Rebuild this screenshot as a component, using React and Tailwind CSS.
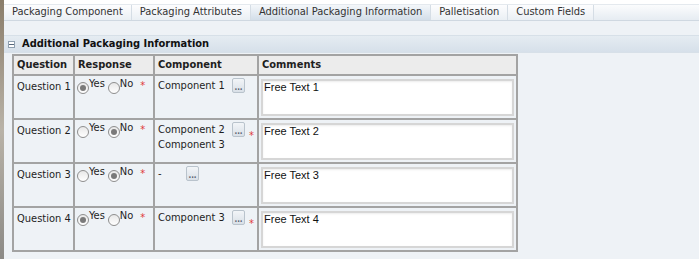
import { useState } from 'react';

const tabs = ['Packaging Component', 'Packaging Attributes', 'Additional Packaging Information', 'Palletisation', 'Custom Fields'];

const rows = [
  { q: 'Question 1', answer: 'yes', components: ['Component 1'], compStar: false, text: 'Free Text 1' },
  { q: 'Question 2', answer: 'no', components: ['Component 2', 'Component 3'], compStar: true, text: 'Free Text 2' },
  { q: 'Question 3', answer: 'no', components: ['-'], compStar: false, text: 'Free Text 3' },
  { q: 'Question 4', answer: 'yes', components: ['Component 3'], compStar: true, text: 'Free Text 4' },
];

function Radio({ checked, label }) {
  return (
    <span className="inline-flex items-start">
      <span className="mt-[4px] grid h-[12px] w-[12px] place-items-center rounded-full border border-[#8e8e8e] bg-gradient-to-b from-[#e8e8e8] to-white">
        {checked && <span className="h-[6px] w-[6px] rounded-full bg-[#7a7a7a]" />}
      </span>
      <span className="leading-[12px]">{label}</span>
    </span>
  );
}

function Star() {
  return <span className="text-[11px] leading-none text-[#e03a3a]">*</span>;
}

function PickButton() {
  return (
    <span className="flex h-[15px] w-[13px] items-end justify-center rounded-[2px] border border-[#b9c3cc] bg-gradient-to-b from-[#f2f5f8] to-[#d9e0e7] pb-[1px] text-[8px] font-bold leading-[6px] text-[#5a6470]">
      ...
    </span>
  );
}

export default function App() {
  const [active] = useState(2);
  return (
    <div className="h-[259px] w-[699px] overflow-hidden bg-[#eef2f6] font-['DejaVu_Sans_Condensed','DejaVu_Sans',sans-serif] text-[11px] text-[#1e1e1e]">
      <div className="flex h-full">
        <div className="w-[4px] bg-gradient-to-b from-[#8a7d6a] via-[#b9b3a8] to-[#8c8a86]" />
        <div className="flex-1">
          <div className="h-[5px] border-b border-[#e4e9ee] bg-white" />
          <div className="flex h-[16px] border-b border-[#cfd8e1] bg-gradient-to-b from-[#fbfcfd] to-[#e6ecf2]">
            {tabs.map((t, i) => (
              <div
                key={t}
                className={`flex items-center whitespace-nowrap border-r border-[#d5dde5] px-[8px] text-[#333] ${
                  i === active ? 'bg-gradient-to-b from-[#f4f7fa] to-[#d3dee9]' : 'bg-gradient-to-b from-[#fdfdfe] to-[#eaeff4]'
                }`}
              >
                {t}
              </div>
            ))}
          </div>
          <div className="h-[14px] bg-[#eef2f6]" />
          <div className="flex h-[18px] items-center border-y border-[#d7e0e8] bg-gradient-to-b from-[#e5ecf2] to-[#d6e0ea] pl-[4px]">
            <span className="mr-[7px] grid h-[7px] w-[7px] place-items-center border border-[#8fa0b0] bg-white">
              <span className="h-[1px] w-[5px] bg-[#57687a]" />
            </span>
            <span className="font-bold text-[#111]">Additional Packaging Information</span>
          </div>
          <div className="pl-[8px] pt-[1px]">
            <table className="w-[506px] table-fixed border-collapse border-2 border-[#a3a3a3]">
              <colgroup>
                <col className="w-[61px]" />
                <col className="w-[80px]" />
                <col className="w-[104px]" />
                <col />
              </colgroup>
              <thead>
                <tr className="h-[20px] bg-[#ececec] text-left font-bold">
                  <th className="border-2 border-[#a3a3a3] px-[3px]">Question</th>
                  <th className="border-2 border-[#a3a3a3] px-[3px]">Response</th>
                  <th className="border-2 border-[#a3a3a3] px-[3px]">Component</th>
                  <th className="border-2 border-[#a3a3a3] px-[3px]">Comments</th>
                </tr>
              </thead>
              <tbody>
                {rows.map((r) => (
                  <tr key={r.q} className="h-[44px] bg-[#eef2f6] align-top">
                    <td className="whitespace-nowrap border-2 border-[#a3a3a3] px-[3px] pt-[3px]">{r.q}</td>
                    <td className="border-2 border-[#a3a3a3] px-[2px] pt-[2px]">
                      <div className="flex items-start gap-[3px]">
                        <Radio checked={r.answer === 'yes'} label="Yes" />
                        <Radio checked={r.answer === 'no'} label="No" />
                        <span className="ml-[4px]"><Star /></span>
                      </div>
                    </td>
                    <td className="border-2 border-[#a3a3a3] px-[3px] pt-[4px]">
                      <div className="flex items-start">
                        <div className={`flex flex-col gap-[3px] whitespace-nowrap ${r.components[0] === '-' ? 'w-[28px]' : 'w-[74px]'}`}>
                          {r.components.map((c) => (
                            <span key={c} className="leading-[12px]">{c}</span>
                          ))}
                        </div>
                        <div className="-mt-[2px] flex items-start gap-[4px]">
                          <PickButton />
                          {r.compStar && <span className="mt-[6px]"><Star /></span>}
                        </div>
                      </div>
                    </td>
                    <td className="border-2 border-[#a3a3a3] px-[2px] pt-[3px]">
                      <div className="h-[37px] w-[253px] border-2 border-[#d6d6d6] bg-white px-[1px] font-['Liberation_Sans',sans-serif] text-[11px] leading-[13px] text-[#111] shadow-[inset_0_1px_2px_rgba(0,0,0,0.08)]">
                        {r.text}
                      </div>
                    </td>
                  </tr>
                ))}
              </tbody>
            </table>
          </div>
        </div>
      </div>
    </div>
  );
}
